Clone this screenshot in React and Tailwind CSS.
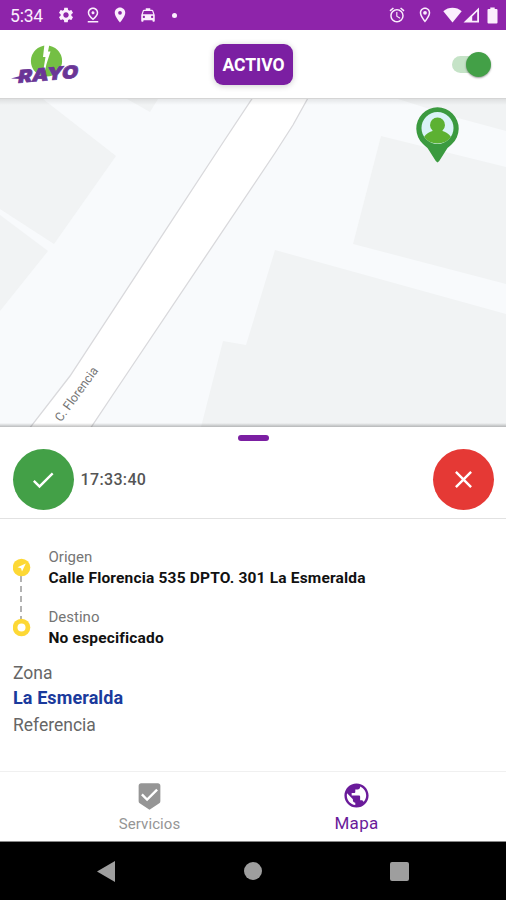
import {
  MdAlarm,
  MdBeenhere,
  MdCheck,
  MdClose,
  MdLocalTaxi,
  MdLocationOn,
  MdOutlineLocationOn,
  MdOutlinePinDrop,
  MdPublic,
  MdSettings,
} from 'react-icons/md'

function StatusBar() {
  return (
    <div className="flex h-[30px] items-center bg-[#8e24aa] pl-[10px] pr-[5px] text-[#fbeefd]">
      <span className="w-[47px] pt-[3px] text-[17.5px] leading-none tracking-[-0.2px]">5:34</span>
      <MdSettings className="size-[18px]" />
      <MdOutlinePinDrop className="ml-[9px] size-[18px]" />
      <MdLocationOn className="ml-[9px] size-[18px]" />
      <MdLocalTaxi className="ml-[10px] size-[18px]" />
      <span className="ml-[15px] size-[5px] rounded-full bg-[#fbeefd]" />
      <MdAlarm className="ml-auto size-[18px]" />
      <MdOutlineLocationOn className="ml-[10px] size-[18px]" />
      <svg className="ml-[9px] h-[16px] w-[19px]" viewBox="0 0 19 16" fill="currentColor">
        <path d="M9.5 15.5 0.3 4.2C5.5-.3 13.5-.3 18.7 4.2Z" />
      </svg>
      <svg className="ml-px h-[16px] w-[17px]" viewBox="0 0 17 16" fill="currentColor">
        <path fillRule="evenodd" d="M0.5 15.5 16 0.5V15.5ZM9.2 13.8H14.2V4.5L9.2 9.4Z" />
      </svg>
      <svg className="ml-[7px] mr-[3px] h-[17px] w-[11px]" viewBox="0 0 11 17" fill="currentColor">
        <path d="M3.300 0.500H7.700V2H9.500Q10.500 2 10.500 3V15.500Q10.500 16.500 9.500 16.500H1.500Q0.500 16.500 0.500 15.500V3Q0.500 2 1.500 2H3.300Z" />
      </svg>
    </div>
  )
}

function Logo() {
  return (
    <svg className="mt-px h-[44px] w-[74px]" viewBox="0 0 74 44">
      <circle cx="35.500" cy="18" r="15.600" fill="#74bf44" />
      <path d="M33.500 1H38.500L37 8.500H39.500L35.500 21 33 32H31.500L34.500 14H32Z" fill="#fff" />
      <path d="M0 35.500 11 32.500 10 36Z" fill="#6a3596" />
      <text
        x="0"
        y="0"
        transform="translate(6.500 40) rotate(-5) skewX(-14)"
        textLength="60"
        lengthAdjust="spacingAndGlyphs"
        fontFamily="Inter"
        fontWeight="900"
        fontSize="17.500"
        fill="#6a3596"
        stroke="#6a3596"
        strokeWidth="0.700"
      >
        RAYO
      </text>
    </svg>
  )
}

function Header() {
  return (
    <header className="grid h-[69px] grid-cols-[1fr_79px_1fr] items-center border-b border-[#d5d5d5] bg-white pl-[11px] pr-[10px]">
      <Logo />
      <button className="h-[41px] rounded-[9px] bg-[#7b1fa2] pt-[3px] text-[17.5px] font-bold text-white shadow-[0_1px_6px_rgba(0,0,0,0.2)]">
        ACTIVO
      </button>
      <div className="mr-[5px] flex w-[39px] items-center justify-self-end">
        <span className="h-[17px] w-[28px] rounded-full bg-[#c5e3c7]" />
        <span className="-ml-[14px] size-[25px] shrink-0 rounded-full bg-[#43a047] shadow-[0_1px_2px_rgba(0,0,0,0.4)]" />
      </div>
    </header>
  )
}

function MapView() {
  return (
    <div className="relative h-[328px] overflow-hidden bg-[#f8fafc]">
      <svg className="h-[328px] w-[506px]" viewBox="0 99 506 328">
        <g fill="#f1f3f4">
          <path d="M0 99H43L116 156 54 244 0 209Z" />
          <path d="M0 215 48 251 0 311Z" />
          <path d="M127 99H158L150 112Z" />
          <path d="M398 99H506V131L458 118Z" />
          <path d="M381 136 506 167V284L353 244Z" />
          <path d="M275 250 506 314V427H201L223 341 246 345Z" />
        </g>
        <path d="M252.500 98 224 141 70 376 29 429H90L112 396 275 153 293 125 308 98Z" fill="#fff" stroke="#d9d9dc" strokeWidth="1.300" />
        <text
          transform="translate(61 422.500) rotate(-54)"
          fontFamily="Roboto"
          fontSize="12.500"
          textLength="64"
          lengthAdjust="spacingAndGlyphs"
          fill="#757575"
        >
          C. Florencia
        </text>
        <path d="M437.500 162.500Q436 162 434.500 159L427.500 148Q425.500 146.500 423 144A21.200 21.200 0 1 1 452 144Q449.500 146.500 447.500 148L440.500 159Q439 162 437.500 162.500Z" fill="#3b9a3f" />
        <circle cx="437.500" cy="128" r="16" fill="#daf3f7" />
        <path d="M424 137C426 133.500 430 132 432.500 131V130.500A7.500 7.500 0 1 1 442.500 130.500V131C445 132 449 133.500 451 137Q446 143.500 437.500 143.500T424 137Z" fill="#5cb132" />
      </svg>
      <div className="absolute inset-x-0 top-0 h-[6px] bg-linear-to-b from-black/8 to-transparent" />
      <div className="absolute inset-x-0 bottom-0 h-[4px] bg-linear-to-b from-transparent to-black/25" />
    </div>
  )
}

function RequestActions() {
  return (
    <div className="flex h-[92px] flex-col items-center border-b border-[#e2e2e2]">
      <span className="mt-2 h-[6px] w-[31px] rounded-full bg-[#7b1fa2]" />
      <div className="mt-2 flex w-full items-center pl-[12.5px] pr-3">
        <button className="flex size-[61px] items-center justify-center rounded-full bg-[#43a047] text-white">
          <MdCheck className="size-[28px]" />
        </button>
        <span className="ml-[7px] text-[16px] font-medium tracking-[0.35px] text-[#555]">17:33:40</span>
        <button className="ml-auto flex size-[61px] items-center justify-center rounded-full bg-[#e53935] text-white">
          <MdClose className="size-[29px]" />
        </button>
      </div>
    </div>
  )
}

function Stop({ label, value }) {
  return (
    <div className="h-[60px]">
      <p className="text-[15px] leading-[19px] text-[#757575]">{label}</p>
      <p className="mt-px text-[15.5px] font-bold leading-[21px] tracking-[0.18px] text-[#111]">{value}</p>
    </div>
  )
}

function TripDetails() {
  return (
    <div className="h-[252px] px-[13px] pt-[28px]">
      <div className="flex">
        <svg className="mt-[11px] h-[80px] w-[18px]" viewBox="0 0 18 80">
          <path d="M8 18V62" stroke="#999" strokeWidth="1.500" strokeDasharray="6 4" />
          <circle cx="8.500" cy="9.500" r="8.800" fill="#fdd835" />
          <path d="M12.800 5.500 4.500 9.300 8 10.300 9 13.500Z" fill="#fff" />
          <circle cx="8.500" cy="69.500" r="8.800" fill="#fdd835" />
          <circle cx="8.500" cy="69.500" r="4" fill="#fff" />
        </svg>
        <div className="ml-[17.5px] pt-px">
          <Stop label="Origen" value="Calle Florencia 535 DPTO. 301 La Esmeralda" />
          <Stop label="Destino" value="No especificado" />
        </div>
      </div>
      <p className="-mt-[7px] text-[17.5px] leading-[24px] text-[#666]">Zona</p>
      <p className="text-[18px] font-bold leading-[26px] tracking-[0.1px] text-[#1a3a9c]">La Esmeralda</p>
      <p className="text-[17.5px] leading-[28px] text-[#666]">Referencia</p>
    </div>
  )
}

function BottomTabs() {
  return (
    <nav className="flex h-[70px] justify-center border-t border-[#f0f0f0]">
      <div className="flex w-[207px] flex-col items-center pt-[10px] text-[#959595]">
        <MdBeenhere className="size-[29px]" />
        <span className="mt-[3px] text-[15px] leading-[20px] tracking-[0.1px]">Servicios</span>
      </div>
      <div className="flex w-[207px] flex-col items-center pt-[9px] text-[#6a1b9a]">
        <MdPublic className="size-[29px]" />
        <span className="mt-[3px] text-[17px] leading-[20px] tracking-[0.3px]">Mapa</span>
      </div>
    </nav>
  )
}

function SystemNav() {
  return (
    <div className="flex h-[59px] items-center justify-between border-t border-[#888] bg-black pl-[97px] pr-[97px] text-[#9e9e9e]">
      <svg className="h-[21px] w-[18px]" viewBox="0 0 18 21" fill="currentColor">
        <path d="M0 10.500 18 0V21Z" />
      </svg>
      <span className="size-[18px] rounded-full bg-[#9e9e9e]" />
      <span className="size-[19px] rounded-[2px] bg-[#9e9e9e]" />
    </div>
  )
}

export default function App() {
  return (
    <div className="h-[900px] w-[506px] overflow-hidden bg-white font-[Roboto,sans-serif]">
      <StatusBar />
      <Header />
      <MapView />
      <RequestActions />
      <TripDetails />
      <BottomTabs />
      <SystemNav />
    </div>
  )
}
